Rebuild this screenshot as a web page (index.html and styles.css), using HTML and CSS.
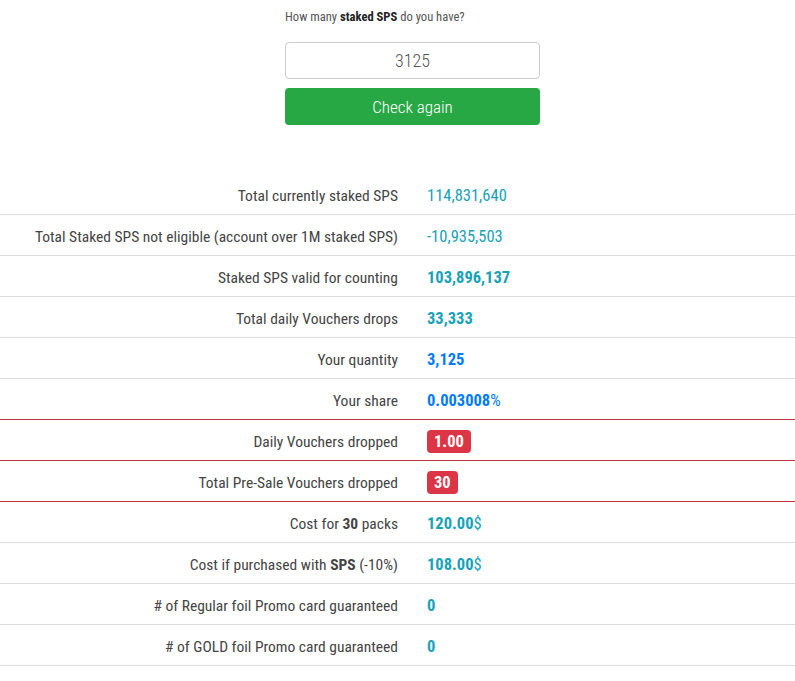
FILE: index.html
```html
<!DOCTYPE html>
<html lang="en">
<head>
    <meta charset="UTF-8">
    <title>Vouchers check</title>
    <link rel="stylesheet" href="styles.css">
</head>
<body>
    <form class="check-form">
        <p class="question">How many <strong>staked SPS</strong> do you have?</p>
        <input type="text" class="qty-input" value="3125">
        <button type="button" class="btn-check">Check again</button>
    </form>

    <div class="results">
        <div class="row">
            <div class="label">Total currently staked SPS</div>
            <div class="value info">114,831,640</div>
        </div>
        <div class="row">
            <div class="label">Total Staked SPS not eligible (account over 1M staked SPS)</div>
            <div class="value info">-10,935,503</div>
        </div>
        <div class="row">
            <div class="label">Staked SPS valid for counting</div>
            <div class="value info bold">103,896,137</div>
        </div>
        <div class="row">
            <div class="label">Total daily Vouchers drops</div>
            <div class="value info bold">33,333</div>
        </div>
        <div class="row">
            <div class="label">Your quantity</div>
            <div class="value primary bold">3,125</div>
        </div>
        <div class="row before-danger">
            <div class="label">Your share</div>
            <div class="value primary bold">0.003008<span class="unit">%</span></div>
        </div>
        <div class="row danger">
            <div class="label">Daily Vouchers dropped</div>
            <div class="value"><span class="badge">1.00</span></div>
        </div>
        <div class="row danger">
            <div class="label">Total Pre-Sale Vouchers dropped</div>
            <div class="value"><span class="badge">30</span></div>
        </div>
        <div class="row">
            <div class="label">Cost for <b>30</b> packs</div>
            <div class="value info bold">120.00<span class="unit">$</span></div>
        </div>
        <div class="row">
            <div class="label">Cost if purchased with <b>SPS</b> (-10%)</div>
            <div class="value info bold">108.00<span class="unit">$</span></div>
        </div>
        <div class="row">
            <div class="label"># of Regular foil Promo card guaranteed</div>
            <div class="value info bold">0</div>
        </div>
        <div class="row">
            <div class="label"># of GOLD foil Promo card guaranteed</div>
            <div class="value info bold">0</div>
        </div>
    </div>
</body>
</html>
```

FILE: styles.css
```css
body {
    font-family: "Roboto Condensed", "Liberation Sans Narrow", "DejaVu Sans Condensed", sans-serif;
    margin: 0;
    padding: 0;
    background-color: #fff;
    color: #444;
}

.check-form {
    width: 255px;
    margin: 0 auto;
    padding-top: 9px;
    display: flex;
    flex-direction: column;
    position: relative;
    left: 15px;
}

.question {
    margin: 0 0 18px;
    font-size: 12.6px;
    color: #555;
}

.question strong {
    color: #222;
}

.qty-input {
    height: 37px;
    box-sizing: border-box;
    border: 1px solid #ccc;
    border-radius: 4px;
    text-align: center;
    font-family: inherit;
    font-size: 18px;
    font-weight: 300;
    color: #555;
    margin-bottom: 9px;
}

.btn-check {
    height: 37px;
    background-color: #28a745;
    color: white;
    border: none;
    border-radius: 4px;
    font-family: inherit;
    font-size: 17px;
    font-weight: 300;
}

.results {
    margin-top: 49px;
}

.row {
    display: grid;
    grid-template-columns: 398px 1fr;
    column-gap: 29px;
    height: 41px;
    padding-top: 3px;
    align-items: center;
    border-bottom: 1px solid #ddd;
    box-sizing: border-box;
    font-size: 15.5px;
}

.row.danger,
.row.before-danger {
    border-bottom-color: #c8323e;
}

.label {
    text-align: right;
}

.value {
    font-size: 16.5px;
}

.value.info {
    color: #17a2b8;
}

.value.primary {
    color: #007bff;
}

.bold {
    font-weight: bold;
}

.unit {
    font-weight: normal;
}

.badge {
    display: inline-block;
    background-color: #dc3545;
    color: white;
    font-weight: bold;
    padding: 2px 7px;
    border-radius: 4px;
}
```
